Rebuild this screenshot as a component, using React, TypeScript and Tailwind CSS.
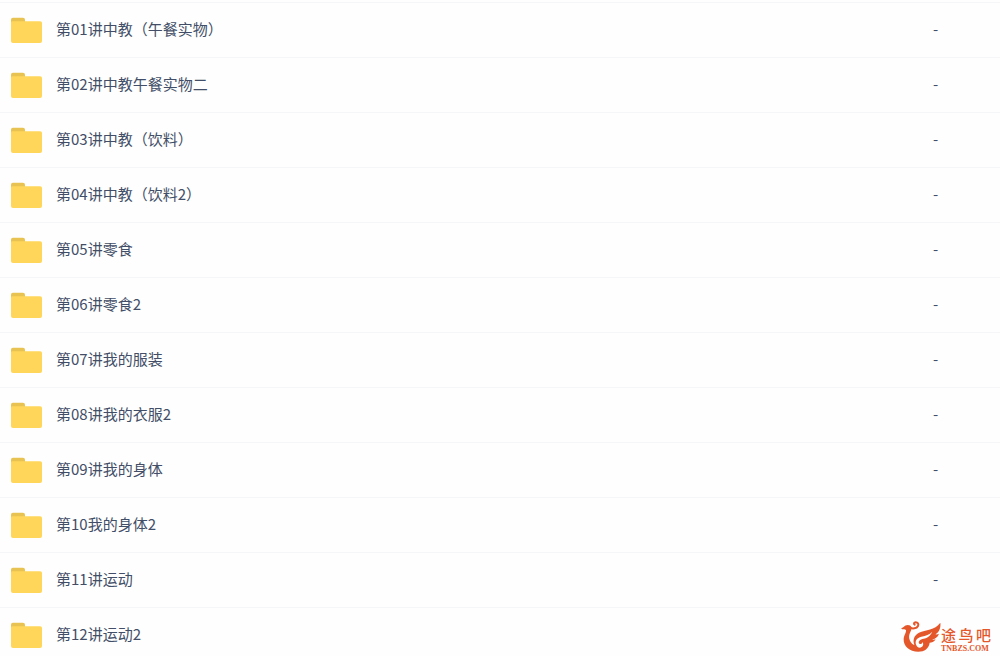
const folders = [
  { name: "第01讲中教（午餐实物）", size: "-" },
  { name: "第02讲中教午餐实物二", size: "-" },
  { name: "第03讲中教（饮料）", size: "-" },
  { name: "第04讲中教（饮料2）", size: "-" },
  { name: "第05讲零食", size: "-" },
  { name: "第06讲零食2", size: "-" },
  { name: "第07讲我的服装", size: "-" },
  { name: "第08讲我的衣服2", size: "-" },
  { name: "第09讲我的身体", size: "-" },
  { name: "第10我的身体2", size: "-" },
  { name: "第11讲运动", size: "-" },
  { name: "第12讲运动2", size: "" },
];

function FolderIcon() {
  return (
    <svg viewBox="0 0 32 26" className="h-[26px] w-8 shrink-0" aria-hidden="true">
      <path d="M1 7V2.6Q1 0.8 2.8 0.8H13Q15 0.8 15 2.8V7Z" fill="#e9c351" />
      <path d="M1 5.4Q1 4.2 2.5 4.2H30.2Q32 4.2 32 6V24Q32 26 30 26H3Q1 26 1 24Z" fill="#ffd65a" />
    </svg>
  );
}

function BirdLogo() {
  return (
    <svg viewBox="0 0 123 96" className="h-8 w-[41px] shrink-0" aria-hidden="true">
      <path
        d="M2 22C10 22 13 12 23 12C35 12 37 22 32 31C27 41 25 50 30 59C33 66 38 70 43 72C37 56 43 42 57 35C77 26 104 28 121 5C123 21 117 34 106 40C110 41 114 40 117 38C113 49 105 54 96 55C100 57 104 56 107 55C102 63 95 65 89 65C87 82 73 92 55 92C28 92 10 76 11 54C12 42 19 35 18 27C14 24 10 28 2 22Z"
        fill="#e4572b"
      />
      <path
        d="M31 20C37 24 50 23 54 15C57 9 53 4 47 4C42 4 40 9 44 11"
        fill="none"
        stroke="#e4572b"
        strokeWidth="6"
        strokeLinecap="round"
      />
      <path
        d="M49 73C43 60 51 50 64 47C78 44 88 41 97 32C90 48 77 52 67 54C57 57 54 64 58 68C62 71 67 68 67 63C73 70 68 80 59 80C54 80 51 77 49 73Z"
        fill="#fff"
      />
    </svg>
  );
}

export default function App() {
  return (
    <main className="relative h-screen overflow-hidden bg-[#fefefe] pt-0.5 font-['Noto_Sans_CJK_SC',sans-serif] text-[15px] leading-5 text-[#424e67]">
      <table className="w-full border-collapse" aria-label="文件列表">
        <tbody>
          {folders.map((folder) => (
            <tr key={folder.name} className="h-[55px] border-t border-[#f5f6f8]">
              <td className="py-0 pl-[10px]">
                <div className="flex items-center gap-[14px]">
                  <FolderIcon />
                  <span className="pb-0.5">{folder.name}</span>
                </div>
              </td>
              <td className="w-[67px] pb-0.5">{folder.size}</td>
            </tr>
          ))}
        </tbody>
      </table>
      <div className="absolute right-[9px] bottom-[3px] flex items-end text-[#e4572b]">
        <BirdLogo />
        <div className="flex w-[50px] flex-col">
          <div className="flex justify-between text-[15px] leading-5 font-medium">
            <span>途</span>
            <span>鸟</span>
            <span>吧</span>
          </div>
          <span className="font-['Liberation_Serif',serif] text-[8px] leading-2 font-bold">TNBZS.COM</span>
        </div>
      </div>
    </main>
  );
}
